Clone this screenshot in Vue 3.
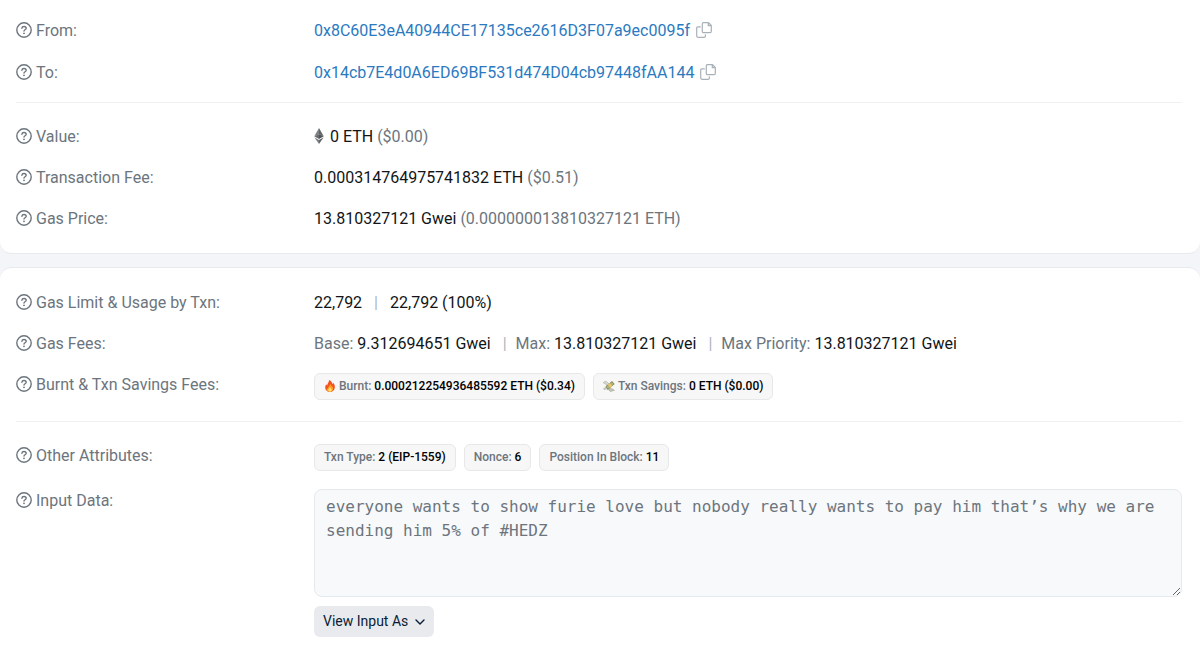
<script setup>
import { ref } from 'vue'

const addresses = [
  { label: 'From:', value: '0x8C60E3eA40944CE17135ce2616D3F07a9ec0095f' },
  { label: 'To:', value: '0x14cb7E4d0A6ED69BF531d474D04cb97448fAA144' },
]
const amounts = [
  { label: 'Value:', value: '0 ETH', note: '($0.00)', eth: true },
  { label: 'Transaction Fee:', value: '0.000314764975741832 ETH', note: '($0.51)' },
  { label: 'Gas Price:', value: '13.810327121 Gwei', note: '(0.000000013810327121 ETH)' },
]
const gasFees = [
  { label: 'Base:', value: '9.312694651 Gwei' },
  { label: 'Max:', value: '13.810327121 Gwei' },
  { label: 'Max Priority:', value: '13.810327121 Gwei' },
]
const attributes = [
  { label: 'Txn Type:', value: '2 (EIP-1559)' },
  { label: 'Nonce:', value: '6' },
  { label: 'Position In Block:', value: '11' },
]
const inputData = ref('everyone wants to show furie love but nobody really wants to pay him that’s why we are sending him 5% of #HEDZ')
</script>

<template>
  <svg class="sprite" aria-hidden="true">
    <symbol id="help" viewBox="0 0 16 16">
      <circle cx="8" cy="8" r="7.2" fill="none" stroke="currentColor" stroke-width="1.4" />
      <path d="M5.900 6.300C6 5.100 6.800 4.500 8 4.500c1.300 0 2.200.7 2.200 1.800 0 1.400-2.200 1.500-2.200 2.700" fill="none" stroke="currentColor" stroke-width="1.400" stroke-linecap="round" />
      <circle cx="8" cy="11.300" r=".9" fill="currentColor" />
    </symbol>
    <symbol id="copy" viewBox="0 0 16 16">
      <path d="M7.500.7h5l2.800 2.800v6a1.200 1.200 0 0 1-1.200 1.200H7.500a1.200 1.200 0 0 1-1.200-1.200V1.900A1.200 1.200 0 0 1 7.500.7zM12.300.9v2.800h2.800M4.300 4.900H1.900A1.200 1.200 0 0 0 .7 6.100v8a1.200 1.200 0 0 0 1.200 1.200h6.300a1.200 1.200 0 0 0 1.200-1.200v-1.300" fill="none" stroke="currentColor" stroke-width="1.200" stroke-linejoin="round" stroke-linecap="round" />
    </symbol>
  </svg>

  <main class="page">
    <section class="card first">
      <dl class="group addresses">
        <div v-for="row in addresses" :key="row.label" class="row">
          <dt><svg class="help"><use href="#help" /></svg>{{ row.label }}</dt>
          <dd class="address">
            <a href="#">{{ row.value }}</a>
            <button class="copy" type="button" aria-label="Copy address"><svg><use href="#copy" /></svg></button>
          </dd>
        </div>
      </dl>
      <hr>
      <dl class="group">
        <div v-for="row in amounts" :key="row.label" class="row">
          <dt><svg class="help"><use href="#help" /></svg>{{ row.label }}</dt>
          <dd>
            <svg v-if="row.eth" class="eth" viewBox="0 0 10 16" aria-hidden="true">
              <path d="M5 0 .3 8.200 5 6.100z" fill="#7b7e82" />
              <path d="M5 0v6.100l4.700 2.100z" fill="#606368" />
              <path d="M.3 8.200 5 6.100V11z" fill="#66696e" />
              <path d="M9.700 8.200 5 6.100V11z" fill="#505358" />
              <path d="M.3 9.200 5 16v-4z" fill="#7b7e82" />
              <path d="M9.700 9.200 5 16v-4z" fill="#606368" />
            </svg>{{ row.value }} <span class="muted">{{ row.note }}</span>
          </dd>
        </div>
      </dl>
    </section>

    <section class="card second">
      <dl class="group">
        <div class="row">
          <dt><svg class="help"><use href="#help" /></svg>Gas Limit &amp; Usage by Txn:</dt>
          <dd class="split limits"><span>22,792</span><span>22,792 (100%)</span></dd>
        </div>
        <div class="row">
          <dt><svg class="help"><use href="#help" /></svg>Gas Fees:</dt>
          <dd class="split">
            <span v-for="fee in gasFees" :key="fee.label"><span class="muted">{{ fee.label }}</span> {{ fee.value }}</span>
          </dd>
        </div>
        <div class="row">
          <dt><svg class="help"><use href="#help" /></svg>Burnt &amp; Txn Savings Fees:</dt>
          <dd class="badges">
            <span class="badge">
              <svg class="emoji" viewBox="0 0 12 12" aria-hidden="true">
                <path d="M5 .1c2.300 1 3.200 2.500 3.300 4.200.5-.4.7-.9.7-1.500C10.500 4.200 11 6 10.800 7.700 10.500 10.200 8.600 12 6 12S1.300 10.200 1.200 7.800c0-1.600.5-2.700 1.100-3.600.2.700.5 1.100.9 1.400C3.300 3.400 5.300 2.300 5 .1z" fill="#f4511e" />
                <path d="M6.300 3.700c.2 1.500 2 2.300 2.600 3.700.8 2.300-.6 4.200-2.900 4.300-2.300 0-3.800-1.700-3.200-3.800.2.400.6.700 1 .8C3.900 6.600 6.200 5.700 6.300 3.700z" fill="#ff9d25" />
                <path d="M6 7c.2 1 1.600 1.500 1.600 2.900 0 1-.7 1.700-1.600 1.700s-1.700-.7-1.700-1.700C4.300 8.700 5.700 8.300 6 7z" fill="#ffe36a" />
              </svg>Burnt: <b>0.000212254936485592 ETH ($0.34)</b>
            </span>
            <span class="badge">
              <svg class="emoji" viewBox="0 0 12 12" aria-hidden="true">
                <path d="M.3 2.700C2 .7 3.500 1.100 5 3.300L7 5 5 6.500C3.500 4.400 2 4 .3 2.700zM4.800 9.800c-.6-1-2-1.200-3.800-.3L.6 8.700C2.300 7.300 4 7 5.500 7.600z" fill="#d9dad3" stroke="#8f948b" stroke-width=".5" />
                <path d="M2.500 6.500 9 1.100l2.600 3-6.600 5.600z" fill="#7f8a4e" />
                <path d="m3.300 6.500 5.600-4.600 1.800 2.200L5 8.900z" fill="#adb27a" />
                <path d="m4.700 4.700 2-1.600 2.600 3-2 1.700z" fill="#e9c56c" />
                <path d="M5.500 8.700c2-.7 4.500-.2 6 1.800-1.700-.2-2.300.6-3.700 1-1-.1-1.700-1-2.300-2.800z" fill="#c5c7b4" stroke="#7f866c" stroke-width=".4" />
              </svg>Txn Savings: <b>0 ETH ($0.00)</b>
            </span>
          </dd>
        </div>
      </dl>
      <hr>
      <dl class="group last">
        <div class="row">
          <dt><svg class="help"><use href="#help" /></svg>Other Attributes:</dt>
          <dd class="badges">
            <span v-for="item in attributes" :key="item.label" class="badge">{{ item.label }} <b>{{ item.value }}</b></span>
          </dd>
        </div>
        <div class="row">
          <dt><svg class="help"><use href="#help" /></svg><label for="input-data">Input Data:</label></dt>
          <dd>
            <textarea id="input-data" v-model="inputData" readonly spellcheck="false"></textarea>
            <button class="view" type="button">View Input As
              <svg viewBox="0 0 10 10" aria-hidden="true"><path d="m1 3 4 4 4-4" fill="none" stroke="currentColor" stroke-width="1.400" stroke-linecap="round" stroke-linejoin="round" /></svg>
            </button>
          </dd>
        </div>
      </dl>
    </section>
  </main>
</template>

<style>
body {
  margin: 0;
  background: #fff;
}
</style>

<style scoped>
.page {
  background: #f3f5f8;
  color: #111518;
  font: 16px/24px Roboto, "Liberation Sans", sans-serif;
}
.sprite {
  position: absolute;
  width: 0;
  height: 0;
}
.card {
  padding: 0 18px 0 16px;
  background: #fff;
}
.first {
  padding-top: 19px;
  padding-bottom: 22px;
  border-bottom: 1px solid #e6e9ed;
  border-radius: 0 0 12px 12px;
}
.second {
  margin-top: 13px;
  padding-top: 23px;
  padding-bottom: 20px;
  border-top: 1px solid #e6e9ed;
  border-radius: 12px 12px 0 0;
}
.group {
  display: grid;
  gap: 17px;
  margin: 0;
}
.addresses,
.last {
  gap: 18px;
}
.row {
  display: grid;
  grid-template-columns: 298px minmax(0, 1fr);
}
dt {
  display: flex;
  align-items: center;
  align-self: start;
  gap: 4px;
  color: #6c757d;
}
dd {
  margin: 0;
}
hr {
  margin: 17px 0 22px;
  border: 0;
  border-top: 1px solid #eff1f3;
}
.second hr {
  margin-top: 21px;
}
.help {
  width: 16px;
  height: 16px;
  margin-bottom: 2px;
}
.muted {
  color: #6c757d;
}
a {
  color: #2b7abf;
  text-decoration: none;
}
.address {
  display: flex;
  align-items: center;
  gap: 6px;
}
.copy {
  display: flex;
  margin-bottom: 2px;
  padding: 0;
  border: 0;
  background: none;
  color: #a8b0b8;
}
.copy svg {
  width: 16px;
  height: 16px;
}
.eth {
  width: 10px;
  height: 16px;
  margin-right: 6px;
  vertical-align: -2px;
}
.split {
  display: flex;
}
.split > span + span::before {
  content: "|";
  margin: 0 9px 0 12px;
  color: #adb5bd;
}
.limits > span + span::before {
  margin-right: 12px;
}
.badges {
  display: flex;
  flex-wrap: wrap;
  gap: 8px;
}
.badge {
  padding: 4px 9px;
  border: 1px solid #e6e8ea;
  border-radius: 6px;
  background: #f7f7f8;
  color: #6c757d;
  font-size: 12px;
  line-height: 17px;
  font-weight: 500;
}
.badge b {
  color: #000;
  font-weight: 500;
}
.emoji {
  width: 12px;
  height: 12px;
  margin-right: 3px;
  vertical-align: -2px;
}
textarea {
  display: block;
  box-sizing: border-box;
  width: 100%;
  height: 108px;
  padding: 5px 11px;
  border: 1px solid #e5e9ee;
  border-radius: 8px;
  outline: 0;
  background: #f8f9fb;
  color: #6c757d;
  font: 16px/24px "DejaVu Sans Mono", monospace;
  resize: vertical;
}
.view {
  display: flex;
  align-items: center;
  gap: 7px;
  margin-top: 9px;
  padding: 5px 9px;
  border: 0;
  border-radius: 6px;
  background: #e9eaee;
  color: #081d35;
  font: 14px/21px Roboto, "Liberation Sans", sans-serif;
}
.view svg {
  width: 10px;
  height: 10px;
}
</style>
